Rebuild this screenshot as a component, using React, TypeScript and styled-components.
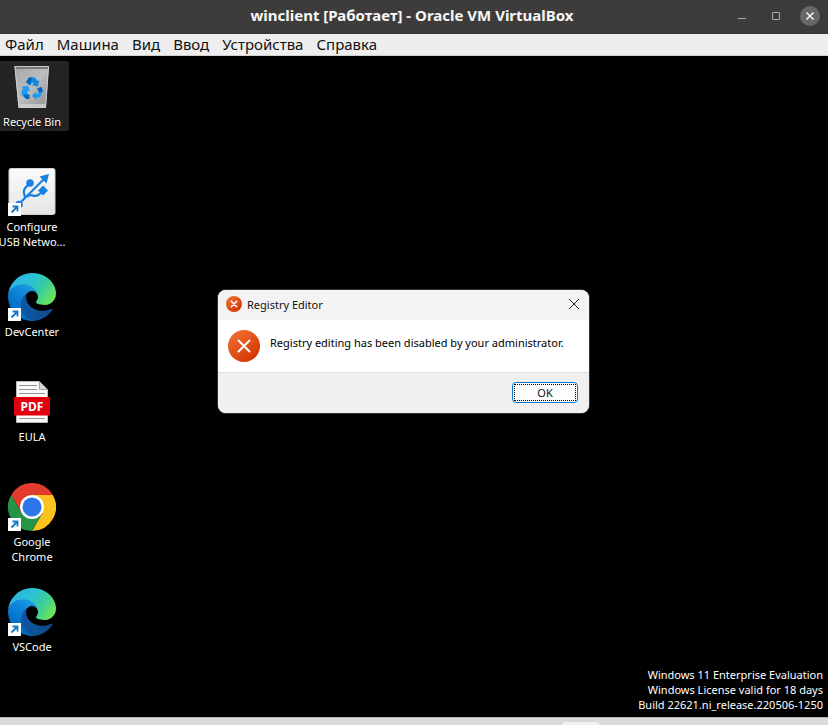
import React from "react";
import styled, { createGlobalStyle } from "styled-components";

const GlobalStyle = createGlobalStyle`
  * { box-sizing: border-box; }
  body { margin: 0; background: #000; }
  button { border: 0; padding: 0; margin: 0; background: none; color: inherit; font: inherit; }
  svg { flex: none; }
`;

const hostFont = `"Noto Sans", "Open Sans", sans-serif`;
const guestFont = `"Noto Sans", "Open Sans", sans-serif`;

const Machine = styled.div`
  display: flex;
  flex-direction: column;
  height: 100vh;
  overflow: hidden;
  background: #000;
`;

const TitleBar = styled.header`
  display: grid;
  grid-template-columns: 1fr auto 1fr;
  align-items: center;
  flex: none;
  height: 34px;
  padding: 0 8px 2px 4px;
  background: #3e3c3b;
  border-bottom: 1px solid #353332;
`;

const MachineTitle = styled.h1`
  grid-column: 2;
  margin: 0;
  padding-bottom: 2px;
  font: bold 15px/20px ${hostFont};
  color: #f7f7f7;
  white-space: nowrap;
`;

const WindowButtons = styled.div`
  display: flex;
  justify-content: flex-end;
  align-items: center;
  gap: 14px;
`;

const WindowButton = styled.button<{ $filled?: boolean }>`
  display: grid;
  place-items: center;
  width: 20px;
  height: 20px;
  border-radius: 50%;
  background: ${(p) => (p.$filled ? "#686868" : "transparent")};
  color: ${(p) => (p.$filled ? "#fff" : "#a9a8a7")};
`;

const MenuBar = styled.nav`
  display: flex;
  align-items: center;
  gap: 13px;
  flex: none;
  height: 22px;
  padding: 0 5px 2px;
  background: #eee;
  border-bottom: 1px solid #cfcfcf;
`;

const MenuItem = styled.button`
  font: 15px/20px ${hostFont};
  color: #111;
`;

const Desktop = styled.main`
  position: relative;
  display: flex;
  flex: 1;
  min-height: 0;
  justify-content: space-between;
  padding-top: 5px;
  background: #000;
  font: 11px/15px ${guestFont};
  color: #fff;
`;

const ShortcutColumn = styled.ul`
  display: grid;
  grid-auto-rows: 105px;
  align-content: start;
  width: 74px;
  margin: 0 0 0 -5px;
  padding: 0;
  list-style: none;
`;

const Shortcut = styled.button<{ $selected?: boolean }>`
  display: flex;
  flex-direction: column;
  align-items: center;
  gap: 3px;
  width: 100%;
  padding: 2px 0;
  border-radius: 3px;
  background: ${(p) => (p.$selected ? "#242424" : "transparent")};
`;

const ShortcutLabel = styled.span`
  line-height: 15px;
  white-space: pre-line;
  text-align: center;
  text-shadow: 0 1px 2px #000;
`;

const Watermark = styled.p`
  align-self: flex-end;
  margin: 0 5px 5px 0;
  line-height: 15px;
  text-align: right;
  white-space: pre-line;
`;

const Dialog = styled.section`
  position: absolute;
  top: 234px;
  left: 218px;
  width: 371px;
  border-radius: 8px;
  overflow: hidden;
  background: #fff;
  color: #111;
  box-shadow: 0 0 0 1px #333;
`;

const DialogHeader = styled.header`
  display: flex;
  align-items: center;
  gap: 5px;
  height: 30px;
  padding: 0 8px 2px;
  background: #f3f3f3;
`;

const DialogTitle = styled.h2`
  flex: 1;
  margin: 0;
  padding-top: 2px;
  font: 11px/16px ${guestFont};
`;

const CloseButton = styled.button`
  display: grid;
  place-items: center;
  width: 14px;
  height: 14px;
`;

const DialogBody = styled.div`
  display: flex;
  gap: 10px;
  padding: 10px;
  border-bottom: 1px solid #dfdfdf;
`;

const Message = styled.p`
  margin: 5px 0 0;
  line-height: 16px;
  white-space: nowrap;
  color: #000;
`;

const DialogFooter = styled.footer`
  display: flex;
  justify-content: flex-end;
  padding: 9px 11px 10px;
  background: #f0f0f0;
`;

const OkButton = styled.button`
  width: 66px;
  height: 21px;
  padding: 1px;
  border: 1px solid #0078d4;
  border-radius: 4px;
  background: #fdfdfd;
`;

const FocusMark = styled.span`
  display: block;
  border: 1px dotted #000;
  line-height: 15px;
`;

const Taskbar = styled.footer`
  flex: none;
  height: 8px;
  padding: 4px 0 0 562px;
  overflow: hidden;
  background: #dadada;
  border-top: 1px solid #b5b5b5;
`;

const TaskButton = styled.button`
  display: block;
  width: 38px;
  height: 36px;
  border-radius: 4px;
  background: #f1f1f1;
`;

const ShortcutArrow = () => (
  <g>
    <path d="M0 35h13v13H0z" fill="#fff" />
    <path d="M3.500 44.500 9 39M4.500 38.500h5V43.500" fill="none" stroke="#1678c8" strokeWidth="1.800" />
  </g>
);

const RecycleIcon = () => (
  <svg width="48" height="48" viewBox="0 0 48 48" aria-hidden="true">
    <defs>
      <linearGradient id="bin" x1="0" y1="0" x2="1" y2="1">
        <stop offset="0" stopColor="#a4a6a8" />
        <stop offset=".5" stopColor="#bcbdbf" />
        <stop offset="1" stopColor="#8c8e91" />
      </linearGradient>
    </defs>
    <path d="M6.500 3h34.500L38 45H10.500z" fill="url(#bin)" />
    <path d="M6.500 3h34.500l-.4 3H7z" fill="#77797b" />
    <path d="M6.500 3.500h34.500" stroke="#c8c9ca" />
    <path d="M7 4 11 44.500h26.500L40.500 4" fill="none" stroke="#cfd0d2" />
    <path d="M11.500 41h26l-.3 3.500H11.800z" fill="#d5d6d8" opacity=".7" />
    <path d="m18 19 3-4.500h6l2.500 3.500 2-.7-1.800 6.200-6-1.300 2-1.200-1.500-2-2 3.500z" fill="#1089e4" />
    <path d="m18 19 3-4.500h3.500l-2.500 8z" fill="#0668c4" />
    <path d="m14 23.500 6-.8 2 5.500-1.800-.8-1 3 1.500 1.800h-1.500l-.5 3.800-5-4-.5-2.500 1.800-4z" fill="#1c9df5" />
    <path d="m17 31 4.500.5v4.500h-3.200L15 33z" fill="#0668c4" />
    <path d="m29 25.500 4.500-1.500 1.500 4-2.800 6-4 .8v2.200L24 32.800l4-4v2h1.800l1.200-2z" fill="#1c9df5" />
    <path d="m29 25.500 4.500-1.500 1.500 4-3.500 1.800z" fill="#0668c4" />
  </svg>
);

const UsbIcon = () => (
  <svg width="48" height="48" viewBox="0 0 48 48" aria-hidden="true">
    <defs>
      <linearGradient id="usb-tile" x1="0" y1="0" x2="0" y2="1">
        <stop offset="0" stopColor="#fafafa" />
        <stop offset="1" stopColor="#e5e5e5" />
      </linearGradient>
    </defs>
    <rect x="1" y=".5" width="46" height="46" rx="2" fill="url(#usb-tile)" stroke="#d0d0d0" />
    <g fill="none" stroke="#1a80e3" strokeWidth="2.200">
      <path d="M10 37 37 10" />
      <path d="m21.500 16-4 3.500q-2.700 3.500-1 7.500l.5 3" />
      <path d="m35 23-4 3.500q-3.500 2.500-7 .7-2.500-.5-5 1.500" />
    </g>
    <g fill="#1a80e3">
      <path d="m41 6-9.500 2.500 7 7z" />
      <circle cx="22" cy="15" r="3.800" />
      <circle cx="11" cy="36.500" r="3.800" />
      <path d="m35 17.500 5 5-5 5-5-5z" />
    </g>
    <ShortcutArrow />
  </svg>
);

const EdgeIcon = ({ id }: { id: string }) => (
  <svg width="48" height="48" viewBox="0 0 48 48" aria-hidden="true">
    <defs>
      <linearGradient id={id + "-navy"} x1="0" y1="0" x2="1" y2="0">
        <stop offset="0" stopColor="#0c59a4" />
        <stop offset="1" stopColor="#114a8b" />
      </linearGradient>
      <linearGradient id={id + "-blue"} x1=".8" y1=".1" x2=".35" y2=".9">
        <stop offset="0" stopColor="#1b9de2" />
        <stop offset=".5" stopColor="#0b80d5" />
        <stop offset="1" stopColor="#0067bf" />
      </linearGradient>
      <linearGradient id={id + "-green"} x1="0" y1=".2" x2="1" y2=".65">
        <stop offset="0" stopColor="#2cafe8" />
        <stop offset=".45" stopColor="#2bc3d1" />
        <stop offset=".7" stopColor="#3bcb9d" />
        <stop offset="1" stopColor="#6be65b" />
      </linearGradient>
    </defs>
    <g transform="scale(.1875) translate(-4.63 -4.92)">
      <path fill={`url(#${id}-navy)`} d="M235.68 195.46a93.73 93.73 0 0 1-10.54 4.71 101.87 101.87 0 0 1-35.9 6.46c-47.32 0-88.54-32.55-88.54-74.32A31.48 31.48 0 0 1 117.13 105c-42.8 1.8-53.8 46.4-53.8 72.53 0 73.88 68.09 81.37 82.76 81.37 7.91 0 19.84-2.3 27-4.56l1.31-.44A128.34 128.34 0 0 0 241 201.1a4 4 0 0 0-5.32-5.64Z" />
      <path fill={`url(#${id}-blue)`} d="M110.34 246.34A79.2 79.2 0 0 1 87.6 225 80.72 80.72 0 0 1 117.13 105c3.12-1.47 8.45-4.13 15.54-4a32.35 32.35 0 0 1 25.69 13 31.88 31.88 0 0 1 6.36 18.66c0-.21 24.46-79.6-80-79.6-43.9 0-80 41.66-80 78.21a130.15 130.15 0 0 0 12.11 56 128 128 0 0 0 156.38 67.11 75.55 75.55 0 0 1-62.78-8Z" />
      <path fill={`url(#${id}-green)`} d="M156.94 153.78c-.81 1.05-3.3 2.5-3.3 5.66 0 2.61 1.7 5.12 4.72 7.23 14.38 10 41.49 8.68 41.56 8.68A59.56 59.56 0 0 0 230.19 167a61.38 61.38 0 0 0 30.43-52.88c.26-22.41-8-37.31-11.34-43.91C228.09 28.76 182.35 4.92 132.61 4.92a128 128 0 0 0-128 126.2c.48-36.54 36.8-66.05 80-66.05 3.5 0 23.46.34 42 10.07 16.34 8.58 24.9 18.94 30.85 29.21 6.18 10.67 7.28 24.15 7.28 29.52S162 147.2 156.94 153.78Z" />
    </g>
    <ShortcutArrow />
  </svg>
);

const PdfIcon = () => (
  <svg width="48" height="48" viewBox="0 0 48 48" aria-hidden="true">
    <path d="M8.500 3.500h23l8 8v33h-31z" fill="#fafafa" stroke="#b9b9b9" />
    <path d="m31.500 3.500 8 8h-8z" fill="#d8d8d8" stroke="#a0a0a0" />
    <path d="M11 7.500h18M11 11.500h18M11 15.500h26M11 40.500h26" stroke="#949494" />
    <path d="M6 19h36v18.500H6z" fill="#e2000f" />
    <text x="24" y="32.500" textAnchor="middle" fontFamily="Noto Sans, sans-serif" fontSize="12" fontWeight="bold" fill="#fff">PDF</text>
  </svg>
);

const ChromeIcon = () => (
  <svg width="48" height="48" viewBox="0 0 48 48" aria-hidden="true">
    <path d="M3.200 12A24 24 0 0 1 44.800 12H24v12l-10.400 6z" fill="#e33b2e" />
    <path d="M44.800 12A24 24 0 0 1 24 48l10.400-18L24 24V12z" fill="#fcc31e" />
    <path d="M24 48A24 24 0 0 1 3.200 12l10.400 18L24 24l10.400 6z" fill="#259447" />
    <circle cx="24" cy="24" r="12" fill="#fff" />
    <circle cx="24" cy="24" r="9.500" fill="#2f76ea" />
    <ShortcutArrow />
  </svg>
);

const ErrorIcon = ({ size, id }: { size: number; id: string }) => (
  <svg width={size} height={size} viewBox="0 0 32 32" aria-hidden="true">
    <defs>
      <linearGradient id={id} x1=".15" y1=".1" x2=".8" y2=".95">
        <stop offset="0" stopColor="#ef6c2f" />
        <stop offset="1" stopColor="#d23504" />
      </linearGradient>
    </defs>
    <circle cx="16" cy="16" r="16" fill={`url(#${id})`} />
    <path d="m10.500 10.500 11 11m0-11-11 11" stroke="#fff" strokeWidth={size > 20 ? 2 : 3} strokeLinecap="round" />
  </svg>
);

const menus = ["Файл", "Машина", "Вид", "Ввод", "Устройства", "Справка"];

const shortcuts = [
  { label: "Recycle Bin", icon: <RecycleIcon />, selected: true },
  { label: "Configure\nUSB Netwo...", icon: <UsbIcon /> },
  { label: "DevCenter", icon: <EdgeIcon id="devcenter" /> },
  { label: "EULA", icon: <PdfIcon /> },
  { label: "Google\nChrome", icon: <ChromeIcon /> },
  { label: "VSCode", icon: <EdgeIcon id="vscode" /> },
];

export default function App() {
  return (
    <>
      <GlobalStyle />
      <Machine>
        <TitleBar>
          <MachineTitle>winclient [Работает] - Oracle VM VirtualBox</MachineTitle>
          <WindowButtons>
            <WindowButton aria-label="Minimize">
              <svg width="8" height="8"><path d="M0 6.500h8" stroke="currentColor" /></svg>
            </WindowButton>
            <WindowButton aria-label="Maximize">
              <svg width="8" height="8"><path d="M.5.5h7v7h-7z" fill="none" stroke="currentColor" /></svg>
            </WindowButton>
            <WindowButton aria-label="Close" $filled>
              <svg width="8" height="8"><path d="m.5.5 7 7m0-7-7 7" stroke="currentColor" strokeWidth="1.400" /></svg>
            </WindowButton>
          </WindowButtons>
        </TitleBar>
        <MenuBar>
          {menus.map((name) => <MenuItem key={name}>{name}</MenuItem>)}
        </MenuBar>
        <Desktop>
          <ShortcutColumn>
            {shortcuts.map((item) => (
              <li key={item.label}>
                <Shortcut $selected={item.selected}>
                  {item.icon}
                  <ShortcutLabel>{item.label}</ShortcutLabel>
                </Shortcut>
              </li>
            ))}
          </ShortcutColumn>
          <Watermark>
            {"Windows 11 Enterprise Evaluation\nWindows License valid for 18 days\nBuild 22621.ni_release.220506-1250"}
          </Watermark>
          <Dialog role="alertdialog" aria-labelledby="dialog-title" aria-describedby="dialog-message">
            <DialogHeader>
              <ErrorIcon size={16} id="error-small" />
              <DialogTitle id="dialog-title">Registry Editor</DialogTitle>
              <CloseButton aria-label="Close">
                <svg width="10" height="10"><path d="m0 0 10 10M10 0 0 10" stroke="#222" /></svg>
              </CloseButton>
            </DialogHeader>
            <DialogBody>
              <ErrorIcon size={32} id="error-large" />
              <Message id="dialog-message">Registry editing has been disabled by your administrator.</Message>
            </DialogBody>
            <DialogFooter>
              <OkButton><FocusMark>OK</FocusMark></OkButton>
            </DialogFooter>
          </Dialog>
        </Desktop>
        <Taskbar><TaskButton aria-label="Running application" /></Taskbar>
      </Machine>
    </>
  );
}
